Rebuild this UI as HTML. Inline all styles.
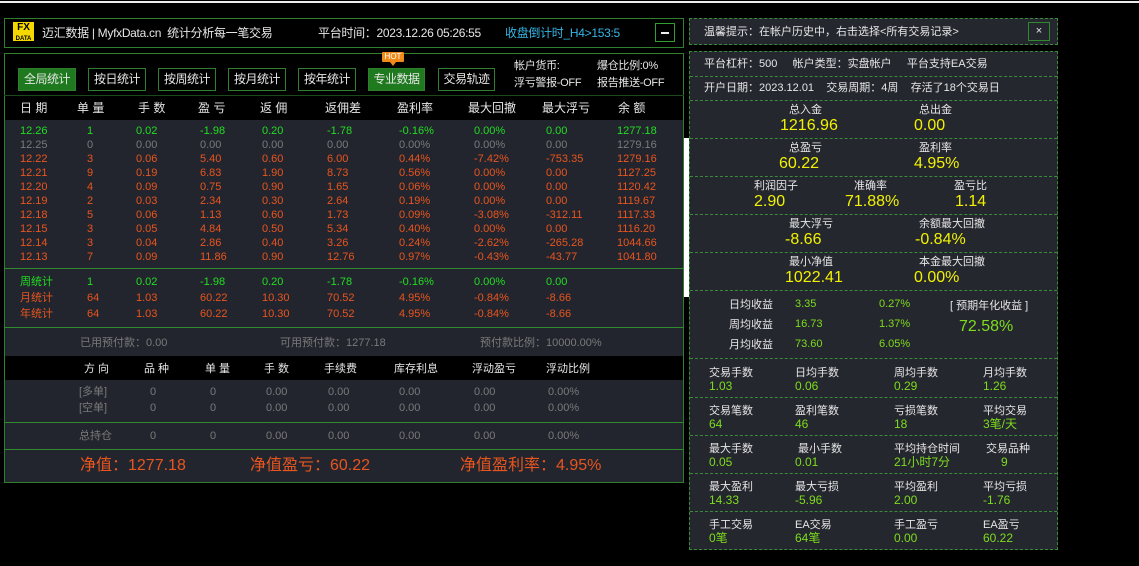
<!DOCTYPE html><html><head><meta charset="utf-8"><style>
*{margin:0;padding:0;box-sizing:border-box}
body{width:1139px;height:566px;background:#000;position:relative;overflow:hidden;font-family:"Liberation Sans","Noto Sans CJK SC",sans-serif;font-size:11px;color:#ddd}
.a{position:absolute;white-space:nowrap;line-height:14px}
.g{color:#22dd22}.o{color:#e8551e}.gr{color:#7a7a7a}.y{color:#f2f200}.lg{color:#7ddc1c}.w{color:#e6e6e6}
.btn{position:absolute;top:68px;height:23px;border:1px solid #2f7f2f;color:#e6e6e6;text-align:center;line-height:21px;font-size:12px;background:#000;white-space:nowrap;letter-spacing:-0.5px}
.btn.on{background:#1f7a1f}
.hl{position:absolute;left:4px;width:680px;height:1px;background:#2f8a2f}
.dl{position:absolute;left:690px;width:367px;border-top:1px dashed #3a8a3a}
</style></head><body>
<div class="a" style="left:0;top:1px;width:1139px;height:2px;background:#eee"></div>
<div class="a" style="left:4px;top:18px;width:680px;height:30px;border:1px solid #2f7f2f;background:#000"></div>
<div class="a" style="left:13px;top:22px;width:21px;height:19px;background:#f5d800;color:#000;font-weight:bold;font-size:10px;line-height:10px;text-align:center;padding-top:1px">FX<br><span style="font-size:6px;line-height:7px">DATA</span></div>
<div class="a w" style="left:42px;top:26px;font-size:12px;letter-spacing:-0.3px">迈汇数据 | MyfxData.cn&nbsp; 统计分析每一笔交易</div>
<div class="a w" style="left:318px;top:26px;font-size:12px;letter-spacing:-0.3px">平台时间：2023.12.26 05:26:55</div>
<div class="a" style="left:505px;top:26px;font-size:12px;letter-spacing:-0.3px;color:#35b5e5">收盘倒计时_H4>153:5</div>
<div class="a" style="left:655px;top:23px;width:20px;height:19px;border:1px solid #2f9f2f;"><div style="position:absolute;left:5px;top:8px;width:8px;height:2px;background:#eee"></div></div>
<div class="a" style="left:4px;top:53px;width:680px;height:430px;border:1px solid #2f7f2f;background:#23252e"></div>
<div class="a" style="left:5px;top:54px;width:678px;height:41px;background:#000"></div>
<div class="btn on" style="left:18px;width:58px">全局统计</div>
<div class="btn" style="left:88px;width:58px">按日统计</div>
<div class="btn" style="left:158px;width:58px">按周统计</div>
<div class="btn" style="left:228px;width:58px">按月统计</div>
<div class="btn" style="left:298px;width:58px">按年统计</div>
<div class="btn on" style="left:368px;width:57px">专业数据</div>
<div class="btn" style="left:438px;width:57px">交易轨迹</div>
<div class="a" style="left:382px;top:52px;width:22px;height:10px;background:#f08a1a;color:#fff;font-size:8px;line-height:10px;text-align:center;border-radius:1px">HOT</div>
<div class="a" style="left:390px;top:62px;width:0;height:0;border-left:3px solid transparent;border-right:3px solid transparent;border-top:4px solid #f08a1a"></div>
<div class="a w" style="left:514px;top:58px;line-height:17px;letter-spacing:-0.3px">帐户货币:<br>浮亏警报-OFF</div>
<div class="a w" style="left:597px;top:58px;line-height:17px;letter-spacing:-0.3px">爆仓比例:0%<br>报告推送-OFF</div>
<div class="hl" style="top:95px;background:#1a4a1a"></div>
<div class="a" style="left:5px;top:96px;width:678px;height:24px;background:#000"></div>
<div class="a w" style="left:0;top:101px;font-size:12px">
<span class="a" style="left:20px">日 期</span><span class="a" style="left:77px">单 量</span><span class="a" style="left:138px">手 数</span><span class="a" style="left:198px">盈 亏</span><span class="a" style="left:260px">返 佣</span><span class="a" style="left:325px">返佣差</span><span class="a" style="left:397px">盈利率</span><span class="a" style="left:468px">最大回撤</span><span class="a" style="left:542px">最大浮亏</span><span class="a" style="left:618px">余 额</span></div>
<div id="rows"></div>
<div class="hl" style="top:268px"></div>
<div class="hl" style="top:327px"></div>
<div class="a gr" style="left:80px;top:336px">已用预付款：0.00</div>
<div class="a gr" style="left:280px;top:336px">可用预付款：1277.18</div>
<div class="a gr" style="left:480px;top:336px">预付款比例：10000.00%</div>
<div class="a" style="left:5px;top:356px;width:678px;height:24px;background:#000"></div>
<div class="a w" style="left:0;top:362px">
<span class="a" style="left:84px">方 向</span><span class="a" style="left:144px">品 种</span><span class="a" style="left:205px">单 量</span><span class="a" style="left:264px">手 数</span><span class="a" style="left:324px">手续费</span><span class="a" style="left:394px">库存利息</span><span class="a" style="left:472px">浮动盈亏</span><span class="a" style="left:546px">浮动比例</span></div>
<div id="pos"></div>
<div class="hl" style="top:422px"></div>
<div class="hl" style="top:449px"></div>
<div class="a o" style="left:80px;top:457px;font-size:16px;line-height:18px">净值：1277.18</div>
<div class="a o" style="left:250px;top:457px;font-size:16px;line-height:18px">净值盈亏：60.22</div>
<div class="a o" style="left:460px;top:457px;font-size:16px;line-height:18px">净值盈利率：4.95%</div>
<div class="a" style="left:684px;top:138px;width:5px;height:159px;background:#fff"></div>
<div class="a" style="left:689px;top:18px;width:369px;height:27px;border:1px dashed #3a8a3a;background:#25272f"></div>
<div class="a w" style="left:704px;top:25px">温馨提示：在帐户历史中，右击选择&lt;所有交易记录&gt;</div>
<div class="a w" style="left:1028px;top:22px;width:22px;height:19px;border:1px solid #2f8a2f;text-align:center;line-height:16px;font-size:11px">×</div>
<div class="a" style="left:689px;top:51px;width:369px;height:499px;border:1px dashed #3a8a3a;background:#25272f"></div>
<div class="a w" style="left:704px;top:57px">平台杠杆：500&nbsp;&nbsp;&nbsp;&nbsp;&nbsp;帐户类型：实盘帐户&nbsp;&nbsp;&nbsp;&nbsp;&nbsp;平台支持EA交易</div>
<div class="dl" style="top:76px"></div>
<div class="a w" style="left:704px;top:81px">开户日期：2023.12.01&nbsp;&nbsp;&nbsp;&nbsp;交易周期：4周&nbsp;&nbsp;&nbsp;&nbsp;存活了18个交易日</div>
<div class="dl" style="top:100px"></div>
<div id="rp"></div>
</body>
<script>
var C=[20,87,136,200,262,327,399,474,546,617];
var D=[["g","12.26","1","0.02","-1.98","0.20","-1.78","-0.16%","0.00%","0.00","1277.18"],
["gr","12.25","0","0.00","0.00","0.00","0.00","0.00%","0.00%","0.00","1279.16"],
["o","12.22","3","0.06","5.40","0.60","6.00","0.44%","-7.42%","-753.35","1279.16"],
["o","12.21","9","0.19","6.83","1.90","8.73","0.56%","0.00%","0.00","1127.25"],
["o","12.20","4","0.09","0.75","0.90","1.65","0.06%","0.00%","0.00","1120.42"],
["o","12.19","2","0.03","2.34","0.30","2.64","0.19%","0.00%","0.00","1119.67"],
["o","12.18","5","0.06","1.13","0.60","1.73","0.09%","-3.08%","-312.11","1117.33"],
["o","12.15","3","0.05","4.84","0.50","5.34","0.40%","0.00%","0.00","1116.20"],
["o","12.14","3","0.04","2.86","0.40","3.26","0.24%","-2.62%","-265.28","1044.66"],
["o","12.13","7","0.09","11.86","0.90","12.76","0.97%","-0.43%","-43.77","1041.80"]];
var h="";
D.forEach(function(r,i){for(var j=1;j<r.length;j++)h+='<div class="a '+r[0]+'" style="left:'+C[j-1]+'px;top:'+(124+i*14)+'px">'+r[j]+'</div>';});
var S=[["g",275,"周统计","1","0.02","-1.98","0.20","-1.78","-0.16%","0.00%","0.00"],["o",291,"月统计","64","1.03","60.22","10.30","70.52","4.95%","-0.84%","-8.66"],["o",307,"年统计","64","1.03","60.22","10.30","70.52","4.95%","-0.84%","-8.66"]];
S.forEach(function(r){for(var j=2;j<r.length;j++)h+='<div class="a '+r[0]+'" style="left:'+C[j-2]+'px;top:'+r[1]+'px">'+r[j]+'</div>';});
document.getElementById("rows").innerHTML=h;
var P=[79,150,210,266,328,399,474,548];h="";
[["[多单]",385],["[空单]",401],["总持仓",429]].forEach(function(r){var v=[r[0],"0","0","0.00","0.00","0.00","0.00","0.00%"];v.forEach(function(t,j){h+='<div class="a gr" style="left:'+P[j]+'px;top:'+r[1]+'px">'+t+'</div>';});});
document.getElementById("pos").innerHTML=h;
h="";
function L(x,y,t,c,s){s=s||11;h+='<div class="a '+c+'" style="left:'+x+'px;top:'+y+'px;font-size:'+s+'px;line-height:'+(s+3)+'px">'+t+'</div>';}
function DL(y){h+='<div class="dl" style="top:'+y+'px"></div>';}
var big=[[103,[[789,"总入金",780,"1216.96"],[919,"总出金",914,"0.00"]]],[141,[[789,"总盈亏",779,"60.22"],[919,"盈利率",914,"4.95%"]]],[179,[[754,"利润因子",754,"2.90"],[854,"准确率",845,"71.88%"],[954,"盈亏比",955,"1.14"]]],[217,[[789,"最大浮亏",785,"-8.66"],[919,"余额最大回撤",915,"-0.84%"]]],[255,[[789,"最小净值",785,"1022.41"],[919,"本金最大回撤",914,"0.00%"]]]];
big.forEach(function(b){b[1].forEach(function(c){L(c[0],b[0],c[1],"w");L(c[2],b[0]+13,c[3],"y",16);});DL(b[0]+35);});
[["日均收益","3.35","0.27%",298],["周均收益","16.73","1.37%",318],["月均收益","73.60","6.05%",338]].forEach(function(r){L(729,r[3],r[0],"w");L(795,r[3]-1,r[1],"lg");L(879,r[3]-1,r[2],"lg");});
L(950,299,"[ 预期年化收益 ]","w");L(959,317,"72.58%","lg",16);
DL(358);
var X=[709,795,894,983];
var G=[[366,["交易手数","1.03"],["日均手数","0.06"],["周均手数","0.29"],["月均手数","1.26"]],[404,["交易笔数","64"],["盈利笔数","46"],["亏损笔数","18"],["平均交易","3笔/天"]],[442,["最大手数","0.05"],[" 最小手数","0.01"],["平均持仓时间","21小时7分"],[" 交易品种","   9"]],[480,["最大盈利","14.33"],["最大亏损","-5.96"],["平均盈利","2.00"],["平均亏损","-1.76"]],[518,["手工交易","0笔"],["EA交易","64笔"],["手工盈亏","0.00"],["EA盈亏","60.22"]]];
G.forEach(function(r,k){for(var j=0;j<4;j++){var dx=(r[j+1][0][0]==" ")?3:0;L(X[j]+dx,r[0],r[j+1][0].trim(),"w");L(X[j]+((r[j+1][1].indexOf(" ")==0)?18:0),r[0]+13,r[j+1][1].trim(),"lg",12);}if(k<4)DL(r[0]+31);});
document.getElementById("rp").innerHTML=h;
</script></html>
